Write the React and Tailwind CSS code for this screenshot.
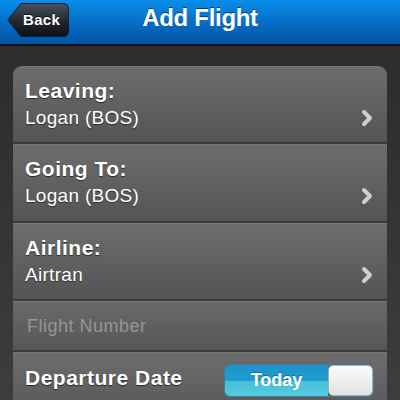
import React from "react";

const Chevron = () => (
  <svg width="14" height="18" viewBox="0 0 14 18" className="shrink-0">
    <polyline points="4,3 10,9 4,15" fill="none" stroke="#cfcfcf" strokeWidth="4" strokeLinecap="round" strokeLinejoin="round" />
  </svg>
);

const SelectRow = ({ label, value, h }) => (
  <div className={`${h} flex flex-col px-[12px] pt-[12px] bg-gradient-to-b from-[#6d6d6d] to-[#545454] border-t border-t-[#777] border-b-2 border-b-[#3a3a3a]`}>
    <div className="text-[21px] leading-[24px] font-bold tracking-[0.5px] text-white [text-shadow:0_1px_1px_rgba(0,0,0,0.6)]">{label}</div>
    <div className="mt-[4px] flex items-center justify-between pr-[1px]">
      <span className="text-[19px] leading-[22px] tracking-[0.3px] text-white [text-shadow:0_1px_1px_rgba(0,0,0,0.5)]">{value}</span>
      <Chevron />
    </div>
  </div>
);

export default function App() {
  return (
    <div className="w-[400px] h-[400px] overflow-hidden bg-gradient-to-b from-[#2a2a2a] to-[#3d3d3d] font-['Liberation_Sans',Arial,sans-serif]">
      <div className="relative h-[46px] bg-gradient-to-b from-[#0a8eea] to-[#0452a3] border-b-2 border-b-[#141414] flex items-center justify-center">
        <div className="absolute left-[7px] top-[3px] w-[62px] h-[34px]">
          <svg width="62" height="34" viewBox="0 0 62 34" className="absolute inset-0">
            <defs>
              <linearGradient id="bk" x1="0" y1="0" x2="0" y2="1">
                <stop offset="0" stopColor="#4a5260" />
                <stop offset="0.5" stopColor="#262a31" />
                <stop offset="1" stopColor="#0d0f12" />
              </linearGradient>
            </defs>
            <path d="M14 0.5 H56 Q61.5 0.5 61.5 6 V28 Q61.5 33.5 56 33.5 H14 L0.8 17 Z" fill="url(#bk)" stroke="#05213f" strokeWidth="1" />
          </svg>
          <span className="absolute left-[16px] top-0 h-[34px] flex items-center text-[15px] font-bold text-white tracking-[0.3px] [text-shadow:0_-1px_0_rgba(0,0,0,0.7)]">Back</span>
        </div>
        <span className="text-[24px] font-bold text-white tracking-[-0.3px] -mt-[8px] [text-shadow:0_-1px_0_rgba(0,0,0,0.5)]">Add Flight</span>
      </div>
      <div className="px-[13px] pt-[20px]">
        <div className="rounded-t-[9px] overflow-hidden">
          <SelectRow label="Leaving:" value="Logan (BOS)" h="h-[78px]" />
          <SelectRow label="Going To:" value="Logan (BOS)" h="h-[79px]" />
          <SelectRow label="Airline:" value="Airtran" h="h-[78px]" />
          <div className="h-[51px] flex items-center px-[14px] bg-gradient-to-b from-[#6a6a6a] to-[#565656] border-t border-t-[#777] border-b-2 border-b-[#3a3a3a]">
            <span className="text-[18px] tracking-[0.5px] text-[#959595]">Flight Number</span>
          </div>
          <div className="h-[60px] flex items-start justify-between pl-[12px] pr-[13px] pt-[11px] bg-gradient-to-b from-[#6d6d6d] to-[#585858] border-t border-t-[#777]">
            <span className="mt-[2px] text-[21px] leading-[24px] font-bold tracking-[0.5px] text-white [text-shadow:0_1px_1px_rgba(0,0,0,0.6)]">Departure Date</span>
            <div className="w-[150px] h-[33px] flex rounded-[6px] overflow-hidden border border-[#3d7da0]">
              <div className="flex-1 flex items-center justify-center bg-[linear-gradient(to_bottom,#1c93c9_0%,#1f9dcf_50%,#48c1d9_52%,#52c9dd_100%)] text-[18px] font-bold text-white [text-shadow:0_-1px_0_rgba(0,0,0,0.3)]">Today</div>
              <div className="w-[45px] bg-gradient-to-b from-[#fbfbfb] to-[#e2e2e2] rounded-[5px] border border-[#aaa]"></div>
            </div>
          </div>
        </div>
      </div>
    </div>
  );
}
